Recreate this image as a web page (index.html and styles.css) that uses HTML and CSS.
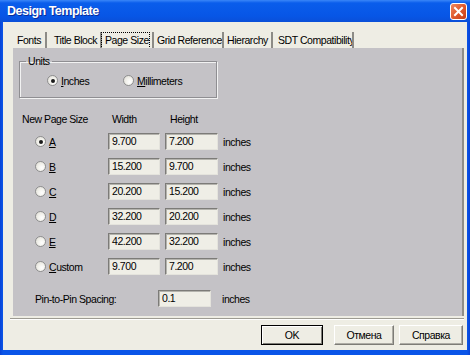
FILE: index.html
```html
<!DOCTYPE html>
<html>
<head>
<meta charset="utf-8">
<link rel="stylesheet" href="styles.css">
</head>
<body>
<div class="window">
  <div class="titlebar">
    <span class="title">Design Template</span>
    <span class="close">
      <svg width="17" height="17" viewBox="0 0 17 17">
        <defs>
          <linearGradient id="cg" x1="0" y1="0" x2="1" y2="1">
            <stop offset="0" stop-color="#f08a63"/>
            <stop offset="0.5" stop-color="#e05a2e"/>
            <stop offset="1" stop-color="#c33a16"/>
          </linearGradient>
        </defs>
        <rect x="0.5" y="0.5" width="16" height="16" rx="2.5" fill="url(#cg)" stroke="#fff"/>
        <path d="M5 5 L12 12 M12 5 L5 12" stroke="#fff" stroke-width="2" stroke-linecap="square"/>
      </svg>
    </span>
  </div>
  <div class="body">
    <div class="tabs">
      <span class="tab t1">Fonts</span>
      <span class="tab t2">Title Block</span>
      <span class="tab t3"><span class="focus">Page Size</span></span>
      <span class="tab t4">Grid Reference</span>
      <span class="tab t5">Hierarchy</span>
      <span class="tab t6">SDT Compatibility</span>
    </div>
    <div class="panel">
      <fieldset class="units">
        <legend>Units</legend>
        <div class="unit-row">
          <span class="opt inches"><span class="radio on"></span><span><u>I</u>nches</span></span>
          <span class="opt"><span class="radio"></span><span><u>M</u>illimeters</span></span>
        </div>
      </fieldset>
      <div class="sizes">
        <span class="hd">New Page Size</span>
        <span class="hd w">Width</span>
        <span class="hd h">Height</span>
        <span class="hd"></span>

        <span class="opt row"><span class="radio on"></span><span><u>A</u></span></span>
        <span class="field">9.700</span><span class="field">7.200</span><span class="unit">inches</span>

        <span class="opt row"><span class="radio"></span><span><u>B</u></span></span>
        <span class="field">15.200</span><span class="field">9.700</span><span class="unit">inches</span>

        <span class="opt row"><span class="radio"></span><span><u>C</u></span></span>
        <span class="field">20.200</span><span class="field">15.200</span><span class="unit">inches</span>

        <span class="opt row"><span class="radio"></span><span><u>D</u></span></span>
        <span class="field">32.200</span><span class="field">20.200</span><span class="unit">inches</span>

        <span class="opt row"><span class="radio"></span><span><u>E</u></span></span>
        <span class="field">42.200</span><span class="field">32.200</span><span class="unit">inches</span>

        <span class="opt row"><span class="radio"></span><span><u>C</u>ustom</span></span>
        <span class="field">9.700</span><span class="field">7.200</span><span class="unit">inches</span>
      </div>
      <div class="pin">
        <span class="pin-label">Pin-to-Pin Spacing:</span>
        <span class="field">0.1</span>
        <span class="unit">inches</span>
      </div>
    </div>
    <div class="rule"></div>
    <div class="buttons">
      <span class="btn default b-ok">OK</span>
      <span class="btn b-cancel">Отмена</span>
      <span class="btn b-help">Справка</span>
    </div>
  </div>
</div>
</body>
</html>
```

FILE: styles.css
```css
html, body {
  margin: 0;
  padding: 0;
}
body {
  width: 470px;
  height: 355px;
  overflow: hidden;
  font-family: "Liberation Sans", Arial, sans-serif;
  font-size: 10.5px;
  letter-spacing: -0.45px;
  color: #000;
}
.window {
  display: flex;
  flex-direction: column;
  height: 355px;
  background: linear-gradient(90deg, #0843d6, #0a55e8 3px, #0a55e8 467px, #0843d6);
}
.titlebar {
  height: 22px;
  flex: none;
  display: flex;
  align-items: center;
  justify-content: space-between;
  padding: 0 3px 0 7px;
  background: linear-gradient(#3a86f8, #0a5deb 3px, #0756e6 16px, #0a4fd8 22px);
}
.title {
  color: #fff;
  font-weight: bold;
  font-size: 12.5px;
  letter-spacing: -0.5px;
  text-shadow: 1px 1px 0 #0a2c9a;
}
.close {
  width: 17px;
  height: 17px;
  display: flex;
}
.body {
  flex: 1;
  margin: 0 3px 5px;
  background: #eeede4;
  display: flex;
  flex-direction: column;
}
.tabs {
  display: flex;
  margin-top: 10px;
  padding-left: 10px;
  height: 16px;
}
.tab {
  box-sizing: border-box;
  height: 16px;
  line-height: 16px;
  border-right: 2px solid #8c8b86;
  padding-left: 4px;
  white-space: nowrap;
  overflow: hidden;
}
.t1 { width: 34px; padding-left: 4px; }
.t2 { width: 55px; padding-left: 7px; }
.t3 { width: 52px; padding-left: 0; overflow: visible; }
.t4 { width: 70px; padding-left: 3px; }
.t5 { width: 49px; padding-left: 3px; }
.t6 { width: 81px; padding-left: 5px; }
.focus {
  display: inline-block;
  box-sizing: border-box;
  width: 49px;
  height: 17px;
  margin-left: -1px;
  padding-left: 3px;
  line-height: 15px;
  border: 1px dotted #000;
}
.panel {
  box-sizing: border-box;
  margin-left: 10px;
  width: 451px;
  height: 268px;
  background: #c4c2c6;
  border-right: 2px solid #8e8d88;
  padding: 7px 0 0 6px;
}
.units {
  box-sizing: border-box;
  width: 198px;
  margin: 0;
  padding: 0 0 10px 0;
  border: 1px solid #8f8e92;
  box-shadow: inset 1px 1px 0 #f2f2f2, 1px 1px 0 #f2f2f2;
}
.units legend {
  margin-left: 6px;
  padding: 0 2px;
  line-height: 13px;
}
.unit-row {
  display: flex;
  margin-top: 6px;
  padding-left: 27px;
  height: 13px;
  align-items: center;
}
.opt {
  display: flex;
  align-items: center;
  gap: 3px;
}
.opt.inches {
  width: 76px;
}
.radio {
  box-sizing: border-box;
  width: 11px;
  height: 11px;
  border-radius: 50%;
  border: 1px solid #8e8e8e;
  background: radial-gradient(circle at 65% 65%, #ffffff 0, #f4f3ee 40%, #dcdad2 100%);
  display: flex;
  align-items: center;
  justify-content: center;
  flex: none;
}
.radio.on::after {
  content: "";
  width: 4px;
  height: 4px;
  border-radius: 50%;
  background: #1a1a1a;
}
.sizes {
  display: grid;
  grid-template-columns: 81px 52px 53px auto;
  grid-template-rows: 12px;
  grid-auto-rows: 17px;
  column-gap: 5px;
  row-gap: 8px;
  margin: 15px 0 0 3px;
  align-items: center;
}
.hd {
  line-height: 12px;
  white-space: nowrap;
}
.hd.w { padding-left: 4px; }
.hd.h { padding-left: 5px; }
.opt.row {
  padding-left: 13px;
}
.field {
  box-sizing: border-box;
  height: 17px;
  line-height: 15px;
  padding-left: 3px;
  background: #efeee6;
  border: 1px solid;
  border-color: #7c7b78 #e4e3dc #e4e3dc #7c7b78;
  box-shadow: inset 1px 1px 0 #b4b3ad;
}
.pin {
  display: flex;
  align-items: center;
  margin-top: 15px;
  padding-left: 16px;
  height: 17px;
}
.pin-label {
  width: 123px;
}
.pin .field {
  width: 53px;
  margin-right: 11px;
}
.rule {
  margin: 2px 0 0 7px;
  width: 454px;
  height: 0;
  border-top: 1px solid #9d9b92;
  border-bottom: 1px solid #ffffff;
}
.buttons {
  display: flex;
  justify-content: flex-end;
  margin-top: 5px;
  padding-right: 4px;
}
.btn {
  box-sizing: border-box;
  height: 20px;
  display: flex;
  align-items: center;
  justify-content: center;
  background: #eeede4;
  border: 1px solid;
  border-color: #ffffff #7d7c77 #7d7c77 #ffffff;
  box-shadow: inset -1px -1px 0 #aeada6;
}
.btn.default {
  border: 1px solid #000;
  box-shadow: inset 1px 1px 0 #fff, inset -1px -1px 0 #7d7c77;
}
.b-ok { width: 62px; margin-right: 11px; }
.b-cancel { width: 60px; margin-right: 5px; }
.b-help { width: 64px; }
```
